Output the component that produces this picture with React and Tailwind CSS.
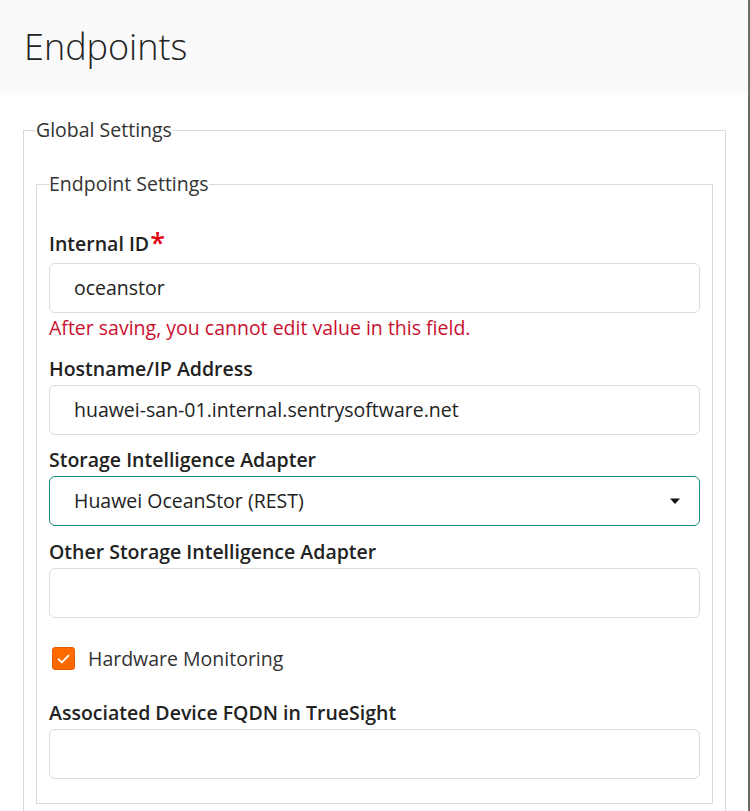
const font = { fontFamily: '"Open Sans", "Noto Sans", sans-serif' };

function Label({ children, required }) {
  return (
    <label className="block text-[19.5px] leading-6 font-semibold text-[#222] mb-1">
      {children}
      {required && <span className="text-[#e4000f] text-[27px] leading-none align-top relative -top-[3px] ml-[1px]">*</span>}
    </label>
  );
}

function TextInput({ value = "" }) {
  return (
    <div className="h-[50px] w-full border border-[#dcdcdc] rounded-md bg-white flex items-center pl-6 text-[19.5px] text-[#222]">
      {value}
    </div>
  );
}

export default function App() {
  return (
    <div className="w-[750px] min-h-[811px] bg-white border-r-2 border-[#6b6b6b]" style={font}>
      <div className="h-[93px] bg-[#fafafa] flex items-center px-6">
        <h1 className="text-[36px] font-light text-[#222] leading-none">Endpoints</h1>
      </div>

      <div className="pt-6 pl-[23px] pr-[22px]">
        <fieldset className="border border-[#d9d9d9] px-3 pt-[28px] pb-3">
          <legend className="text-[19.5px] leading-[26px] text-[#333]">Global Settings</legend>

          <fieldset className="border border-[#d9d9d9] px-3 pt-[35px] pb-6">
            <legend className="text-[19.5px] leading-[26px] text-[#333]">Endpoint Settings</legend>

            <div>
              <Label required>Internal ID</Label>
              <TextInput value="oceanstor" />
              <div className="mt-[3px] text-[19.5px] leading-6 text-[#c8102e]">
                After saving, you cannot edit value in this field.
              </div>
            </div>

            <div className="mt-[17px]">
              <Label>Hostname/IP Address</Label>
              <TextInput value="huawei-san-01.internal.sentrysoftware.net" />
            </div>

            <div className="mt-[13px]">
              <Label>Storage Intelligence Adapter</Label>
              <div className="h-[50px] w-full border border-[#1b8a80] rounded-md bg-white flex items-center justify-between pl-6 pr-4 text-[19.5px] text-[#222]">
                <span>Huawei OceanStor (REST)</span>
                <svg width="12" height="8" viewBox="0 0 12 8" className="mr-[2px]">
                  <path d="M1 1.5h10L6 7z" fill="#111" />
                </svg>
              </div>
            </div>

            <div className="mt-[14px]">
              <Label>Other Storage Intelligence Adapter</Label>
              <TextInput />
            </div>

            <div className="mt-[29px] h-[23px] flex items-center pl-[3px]">
              <span className="w-[23px] h-[23px] rounded-[3px] bg-[#ff6a00] border border-[#e05a00] flex items-center justify-center">
                <svg width="13" height="10" viewBox="0 0 13 10">
                  <path d="M1.5 5.2l3.4 3.2L11.5 1.6" fill="none" stroke="#fff" strokeWidth="1.8" strokeLinecap="round" strokeLinejoin="round" />
                </svg>
              </span>
              <span className="ml-[13px] text-[19.5px] leading-[23px] text-[#333]">Hardware Monitoring</span>
            </div>

            <div className="mt-[31px]">
              <Label>Associated Device FQDN in TrueSight</Label>
              <TextInput />
            </div>
          </fieldset>
        </fieldset>
      </div>
    </div>
  );
}
